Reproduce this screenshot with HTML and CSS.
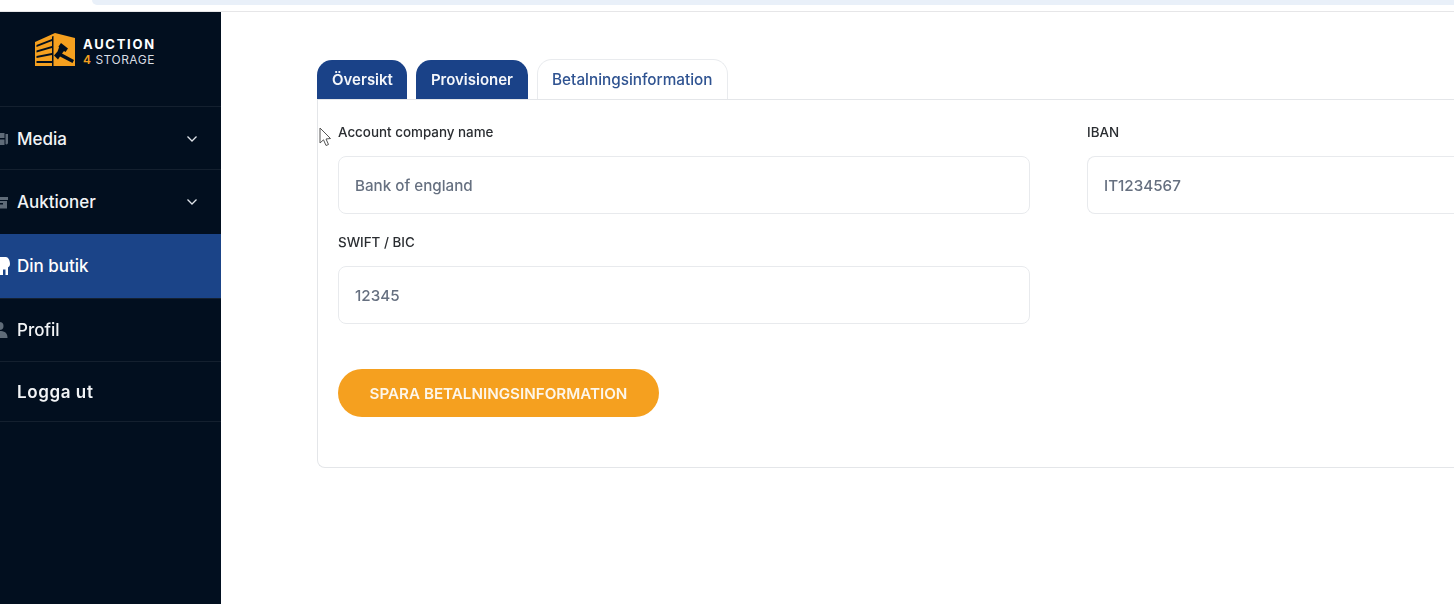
FILE: index.html
```html
<!DOCTYPE html>
<html lang="sv">
<head>
    <meta charset="utf-8">
    <title>Din butik</title>
    <link rel="stylesheet" href="styles.css">
</head>
<body>
    <div class="topstrip"><div class="topstrip-bar"></div></div>
    <div class="layout">
        <aside class="sidebar">
            <div class="brand">
                <svg class="brand-logo" width="40" height="33" viewBox="0 0 40 33">
                    <path d="M0 9 L20 0 L40 5 V33 H0 Z" fill="#f5a01f"/>
                    <path d="M17 3.500 L18.500 3 V33 H17 Z" fill="#020f1f"/>
                    <path d="M1.500 12 L17 6 V8 L1.500 14 Z M1.500 17.500 L17 13 V15 L1.500 19.500 Z M1.500 23 L17 20 V22 L1.500 25 Z M1.500 28 H17 V30 H1.500 Z" fill="#020f1f"/>
                    <path d="M26 10 L33 15.500 L30.500 19 L29 18 L27 20.500 L39 27 L37.500 30 L25 23.500 L23 26.500 L19 22.500 L22.500 18.500 L24 14.500 L23.500 13.500 Z" fill="#020f1f"/>
                </svg>
                <div class="brand-name">
                    <span class="brand-top">AUCTION</span>
                    <span class="brand-bottom"><b>4</b> STORAGE</span>
                </div>
            </div>
            <nav class="menu">
                <a class="menu-item menu-media">
                    <svg class="menu-icon" width="16" height="16" viewBox="0 0 16 16"><path d="M5 2 H12.500 V7 H5 Z M5 8.500 H12.500 V14 H5 Z" fill="#5f6b78"/><path d="M13.500 3 H16 V12 A1.500 1.500 0 0 1 13.500 13 Z" fill="#5f6b78"/></svg>
                    <span>Media</span>
                    <svg class="menu-arrow" width="10" height="6" viewBox="0 0 10 6"><path d="M.5 .5 L5 5 L9.500 .5" fill="none" stroke="#dfe4ea" stroke-width="1.300"/></svg>
                </a>
                <a class="menu-item menu-auction">
                    <svg class="menu-icon" width="16" height="16" viewBox="0 0 16 16"><path d="M0 3 H16 V6 H0 Z M1 7 H15 V14.500 H1 Z" fill="#5f6b78"/><path d="M5 9 H11 V10.500 H5 Z" fill="#010e1e"/></svg>
                    <span>Auktioner</span>
                    <svg class="menu-arrow" width="10" height="6" viewBox="0 0 10 6"><path d="M.5 .5 L5 5 L9.500 .5" fill="none" stroke="#dfe4ea" stroke-width="1.300"/></svg>
                </a>
                <a class="menu-item menu-shop active">
                    <svg class="menu-icon menu-icon-shop" width="18" height="20" viewBox="0 0 18 20"><path d="M4 1 H14 C16 1 18 4 18 8 C18 11 15.500 12.500 13.500 11 C12 12.500 10 12.500 8.500 11 C7 12.500 3 12.500 2 11 C1 11 0 10 0 8 C0 4 2 1 4 1 Z" fill="#fff"/><path d="M2 11 H16 V19 H13.500 V13.500 H11 V19 H2 Z" fill="#fff"/></svg>
                    <span>Din butik</span>
                </a>
                <a class="menu-item menu-profile">
                    <svg class="menu-icon" width="16" height="18" viewBox="0 0 16 18"><circle cx="7.500" cy="5" r="4" fill="#5f6b78"/><path d="M0 17 C0 11 3 10 7.500 10 C12 10 15.500 11 15.500 17 Z" fill="#5f6b78"/></svg>
                    <span>Profil</span>
                </a>
                <a class="menu-item menu-logout"><span>Logga ut</span></a>
            </nav>
        </aside>
        <main class="content">
            <div class="tabs">
                <a class="tab tab-blue">Översikt</a>
                <a class="tab tab-blue">Provisioner</a>
                <a class="tab tab-open">Betalningsinformation</a>
            </div>
            <section class="panel">
                <div class="fields">
                    <div class="field">
                        <label class="field-label">Account company name</label>
                        <div class="field-input">Bank of england</div>
                    </div>
                    <div class="field">
                        <label class="field-label">IBAN</label>
                        <div class="field-input field-input-cut">IT1234567</div>
                    </div>
                    <div class="field">
                        <label class="field-label">SWIFT / BIC</label>
                        <div class="field-input">12345</div>
                    </div>
                </div>
                <button class="save">SPARA BETALNINGSINFORMATION</button>
            </section>
        </main>
    </div>
    <!-- recorded mouse pointer -->
    <svg class="pointer" width="13" height="20" viewBox="0 0 13 20"><path d="M1 1 V16 L4.500 12.800 L7 18.500 L9.500 17.500 L7 12 L11.500 11.500 Z" fill="#fff" stroke="#555" stroke-width="1"/></svg>
</body>
</html>
```
FILE: styles.css
```css
*{ padding: 0px; margin: 0px; box-sizing: border-box; }

html, body
{
    overflow: hidden;
    background: white;
    width: 100%;
    height: 100%;
}

body
{
    font-family: Inter, "Liberation Sans", sans-serif;
}

.topstrip
{
    height: 12px;
    padding-left: 92px;
    border-bottom: 1px solid #e6e6e8;
}

.topstrip-bar
{
    height: 5px;
    background: #e9f0f9;
    border-bottom-left-radius: 6px;
}

.layout
{
    display: flex;
    height: 592px;
    filter: blur(.35px);
}

.sidebar
{
    width: 221px;
    flex-shrink: 0;
    background: #020f1f;
}

.brand
{
    height: 94px;
    padding: 21px 0 0 35px;
    display: flex;
    gap: 8px;
}

.brand-name
{
    display: flex;
    flex-direction: column;
    padding-top: 4px;
    color: #fff;
    white-space: nowrap;
}

.brand-top
{
    font-size: 13px;
    line-height: 15px;
    font-weight: 700;
    letter-spacing: 1.700px;
}

.brand-bottom
{
    font-size: 12px;
    line-height: 15px;
    letter-spacing: .5px;
    color: #d8dde3;
}

.brand-bottom b
{
    color: #f5a01f;
    font-weight: 600;
}

.menu-item
{
    display: flex;
    align-items: center;
    padding: 0 24px 0 17px;
    border-top: 1px solid #14202f;
    color: #f2f4f6;
    font-size: 17px;
    font-weight: 500;
}

.menu-media
{
    height: 63px;
    padding-top: 1px;
}

.menu-auction
{
    height: 65px;
}

.menu-shop
{
    height: 64px;
    padding-bottom: 1px;
}

.menu-profile
{
    height: 63px;
}

.menu-logout
{
    height: 61px;
    border-bottom: 1px solid #14202f;
    font-weight: 600;
    letter-spacing: .6px;
}

.menu-item.active
{
    background: #1b4488;
    color: #fff;
    border-top-color: #1b4488;
}

.menu-icon
{
    margin-left: -25px;
    margin-right: 9px;
    flex-shrink: 0;
}

.menu-icon-shop
{
    margin-right: 7px;
}

.menu-arrow
{
    margin-left: auto;
}

.content
{
    flex: 1;
    min-width: 0;
    padding: 48px 0 0 96px;
}

.tabs
{
    display: flex;
    gap: 9px;
    height: 39px;
}

.tab
{
    display: flex;
    align-items: center;
    padding: 0 15px;
    border-radius: 15px 15px 0 0;
    font-size: 15.300px;
    white-space: nowrap;
}

.tab-blue
{
    background: #1a4288;
    color: #f4f6fa;
    font-size: 15px;
    font-weight: 600;
}

.tab-blue:first-child
{
    padding-right: 14px;
}

.tab-open
{
    position: relative;
    z-index: 1;
    height: 40px;
    margin-top: -1px;
    padding: 0 15px 0 14px;
    background: #fff;
    color: #2f5391;
    font-weight: 500;
    border: 1px solid #e9ebee;
    border-bottom: none;
}

.panel
{
    height: 369px;
    padding: 24px 0 0 20px;
    border: 1px solid #e4e6e9;
    border-right: none;
    border-radius: 0 0 0 8px;
}

.fields
{
    display: grid;
    grid-template-columns: 692px 1fr;
    column-gap: 57px;
    row-gap: 20px;
}

.field-label
{
    display: block;
    height: 32px;
    font-size: 13.400px;
    line-height: 16px;
    font-weight: 500;
    color: #2a2d31;
}

.field-input
{
    height: 58px;
    padding: 0 16px;
    display: flex;
    align-items: center;
    border: 1px solid #e8eaed;
    border-radius: 8px;
    font-size: 15.200px;
    font-weight: 500;
    color: #667080;
}

.field-input-cut
{
    border-right: none;
    border-radius: 8px 0 0 8px;
}

.save
{
    display: block;
    width: 321px;
    height: 48px;
    margin-top: 45px;
    border: none;
    border-radius: 24px;
    background: #f5a01f;
    color: #fdf6ea;
    font-family: Inter, "Liberation Sans", sans-serif;
    font-size: 15.200px;
    font-weight: 600;
}

.pointer
{
    position: absolute;
    left: 319px;
    top: 127px;
}
```
